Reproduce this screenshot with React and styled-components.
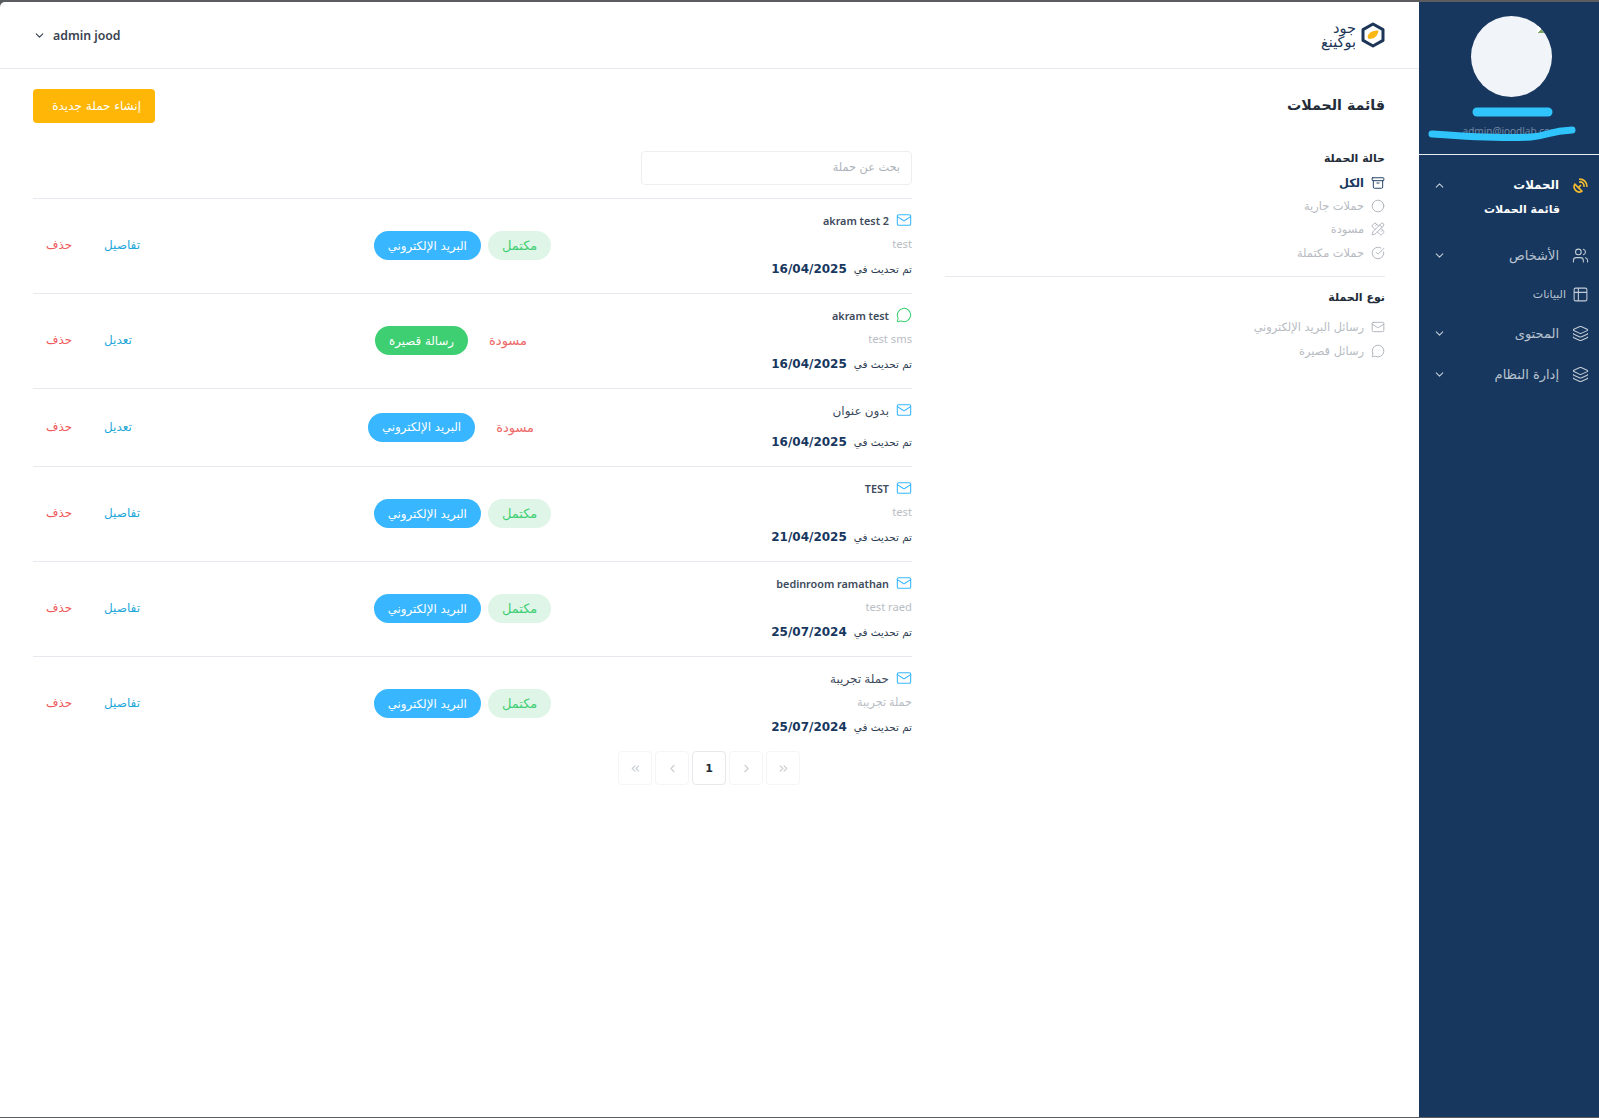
import React from 'react';
import styled, { createGlobalStyle } from 'styled-components';
import {
  Archive,
  ChevronDown,
  ChevronLeft,
  ChevronRight,
  ChevronUp,
  ChevronsLeft,
  ChevronsRight,
  Circle,
  CircleCheckBig,
  Layers,
  Mail,
  MessageCircle,
  PencilRuler,
  SatelliteDish,
  Table2,
  Users,
} from 'lucide-react';

const FONT = `'DejaVu Sans', 'Noto Sans', sans-serif`;
const LATIN = `'Noto Sans', 'DejaVu Sans', sans-serif`;

const GlobalStyle = createGlobalStyle`
  * {
    box-sizing: border-box;
  }
  html, body {
    margin: 0;
    padding: 0;
    background: #5a5c60;
    font-family: ${FONT};
  }
`;

const Shell = styled.div`
  display: flex;
  height: 1115px;
  margin: 2px 0 1px;
  border-top-left-radius: 5px;
  overflow: hidden;
`;

/* sidebar */
const Sidebar = styled.aside`
  width: 180px;
  flex-shrink: 0;
  background: #17375e;
  color: #fff;
`;

const Profile = styled.div`
  position: relative;
  height: 153px;
  border-bottom: 1px solid #e9edf2;
  display: flex;
  flex-direction: column;
  align-items: center;
  padding: 14px 0 0 4px;
`;

const Avatar = styled.div`
  position: relative;
  width: 81px;
  height: 81px;
  border-radius: 50%;
  background: #f1f4f9;
  overflow: hidden;
`;

const BrokenImage = styled.span`
  position: absolute;
  top: 10px;
  left: 66px;
  width: 7px;
  height: 7px;
  background: linear-gradient(135deg, #fff 50%, #7fa86a 50%);
`;

const ProfileEmail = styled.div`
  margin-top: 27px;
  font-family: ${LATIN};
  font-size: 10px;
  color: #6f86a3;
  direction: ltr;
`;

const Scribble = styled.svg`
  position: absolute;
  top: 0;
  left: 0;
`;

const Menu = styled.nav`
  padding-top: 15px;
`;

const MenuRow = styled.div`
  height: ${(p) => (p.$first ? 30 : 41)}px;
  display: flex;
  align-items: center;
  padding: 0 8px 0 14px;
  color: ${(p) => (p.$active ? '#fff' : '#b9c3d0')};
  font-size: ${(p) => (p.$active ? 11.8 : 13)}px;
  font-weight: ${(p) => (p.$active ? 600 : 400)};
`;

const MenuIcon = styled.span`
  width: 22px;
  display: flex;
  justify-content: center;
  margin-left: 10px;
  color: ${(p) => p.$color || '#c3ccd7'};
`;

const MenuChevron = styled.span`
  margin-right: auto;
  display: flex;
  color: #c3ccd7;
`;

const SubLink = styled.div`
  height: 20px;
  margin-bottom: 15px;
  padding-right: 39px;
  font-size: 11px;
  font-weight: 700;
  line-height: 20px;
  color: #fff;
`;

const DataRow = styled(MenuRow)`
  height: 36px;
  margin-bottom: 1px;
  font-size: 11px;

  ${MenuIcon} {
    margin-left: 3px;
  }
`;

/* top bar */
const Main = styled.main`
  flex: 1;
  min-width: 0;
  background: #fff;
`;

const Header = styled.header`
  height: 67px;
  border-bottom: 1px solid #e6e9ed;
  display: flex;
  align-items: center;
  justify-content: space-between;
  padding: 0 34px 0 33px;
`;

const Logo = styled.div`
  display: flex;
  align-items: center;
  gap: 5px;
`;

const LogoText = styled.div`
  font-size: 14.5px;
  line-height: 14px;
  color: #1d3557;
`;

const UserMenu = styled.div`
  direction: ltr;
  display: flex;
  align-items: center;
  gap: 7px;
  font-family: ${LATIN};
  font-size: 12.3px;
  font-weight: 600;
  color: #3a4352;
`;

/* content */
const Content = styled.div`
  padding: 20px 34px 0 33px;
`;

const TitleRow = styled.div`
  display: flex;
  align-items: center;
  justify-content: space-between;
  height: 34px;
`;

const PageTitle = styled.h1`
  margin: 0 0 2px;
  font-size: 14.2px;
  font-weight: 700;
  color: #222b38;
`;

const NewButton = styled.button`
  width: 122px;
  height: 34px;
  border: 0;
  border-radius: 4px;
  background: #ffb606;
  color: #fff;
  font-family: ${FONT};
  font-size: 12px;
  padding: 0 14px;
  text-align: right;
`;

const Columns = styled.div`
  display: flex;
  gap: 33px;
  margin-top: 28px;
`;

const Filters = styled.section`
  width: 440px;
  flex-shrink: 0;
`;

const FilterTitle = styled.h2`
  margin: 0;
  font-size: 11px;
  font-weight: 700;
  line-height: 16px;
  color: #222b38;
`;

const FilterGroup = styled.div`
  padding-bottom: 11px;

  & + & {
    border-top: 1px solid #e6e9ed;
    padding-top: 13px;
  }
`;

const FilterList = styled.div`
  margin-top: ${(p) => p.$gap}px;
  display: flex;
  flex-direction: column;
`;

const FilterItem = styled.div`
  height: 23.4px;
  display: flex;
  align-items: center;
  gap: 7px;
  font-size: 11.4px;
  font-weight: ${(p) => (p.$active ? 700 : 400)};
  color: ${(p) => (p.$active ? '#17375e' : '#b7bbc2')};

  svg {
    color: ${(p) => (p.$active ? '#17375e' : '#a3a8b0')};
    flex-shrink: 0;
  }
`;

const ListColumn = styled.section`
  flex: 1;
  min-width: 0;
`;

const SearchBox = styled.div`
  width: 271px;
  height: 34px;
  border: 1px solid #eceef1;
  border-radius: 4px;
  padding: 0 11px 2px;
  display: flex;
  align-items: center;
  font-size: 11.3px;
  color: #adb2ba;
  margin-bottom: 13px;
`;

const Row = styled.article`
  display: grid;
  grid-template-columns: 160px 1fr 140px;
  align-items: center;
  border-top: 1px solid #e6e9ed;
  padding: 11px 0 14px;
`;

const Info = styled.div`
  display: flex;
  flex-direction: column;
`;

const RowTitle = styled.div`
  height: 20px;
  display: flex;
  align-items: center;
  gap: 7px;
  font-family: ${LATIN};
  font-size: ${(p) => (p.$arabic ? 12 : 10.8)}px;
  font-weight: ${(p) => (p.$arabic ? 400 : 600)};
  color: #3d4a5c;
  white-space: nowrap;

  svg {
    color: ${(p) => p.$color};
    flex-shrink: 0;
  }
`;

const RowSub = styled.div`
  height: 20px;
  margin: 4px 0 5px;
  font-family: ${LATIN};
  font-size: 11.2px;
  line-height: 20px;
  color: #b9bdc4;

  &:empty {
    height: 3px;
  }
`;

const Updated = styled.div`
  height: 20px;
  display: flex;
  align-items: center;
  gap: 7px;
  font-size: 10.4px;
  color: #2b3a4e;
  white-space: nowrap;
`;

const DateText = styled.b`
  font-size: 12px;
  font-weight: 700;
  color: #17375e;
`;

const Badges = styled.div`
  display: flex;
  justify-content: center;
  align-items: center;
  gap: 7px;
  padding-top: 2px;
  padding-right: ${(p) => (p.$draft ? 9 : 0)}px;
`;

const StatusPill = styled.span`
  height: 29px;
  padding: 0 14px;
  border-radius: 15px;
  display: flex;
  align-items: center;
  font-size: 13px;
  color: ${(p) => (p.$done ? '#3ecf73' : '#ee6a6a')};
  background: ${(p) => (p.$done ? '#dff5e7' : 'transparent')};
`;

const TypePill = styled.span`
  height: 29px;
  padding: 0 14px;
  border-radius: 15px;
  display: flex;
  align-items: center;
  font-size: 11.8px;
  color: #fff;
  background: ${(p) => (p.$sms ? '#3ecf73' : '#38b6ff')};
`;

const Actions = styled.div`
  display: flex;
  align-items: center;
  padding: 1px 0 0 13px;
  font-size: 12px;
`;

const EditLink = styled.a`
  flex: 1;
  order: 1;
  text-align: left;
  color: #1ea7d8;
`;

const DeleteLink = styled.a`
  order: 2;
  width: 58px;
  text-align: left;
  color: #ee5a5a;
`;

const Pagination = styled.div`
  direction: ltr;
  display: flex;
  justify-content: flex-end;
  gap: 3px;
  padding-right: 112px;
`;

const PageButton = styled.button`
  width: 34px;
  height: 34px;
  padding: 0;
  background: #fff;
  border: 1px solid ${(p) => (p.$current ? '#e6e8ec' : '#f4f5f7')};
  border-radius: 4px;
  display: flex;
  align-items: center;
  justify-content: center;
  font-family: ${FONT};
  font-size: 11px;
  font-weight: 700;
  color: ${(p) => (p.$current ? '#222b38' : '#c9cdd3')};
`;

const campaigns = [
  { title: 'akram test 2', sub: 'test', date: '16/04/2025', done: true, sms: false },
  { title: 'akram test', sub: 'test sms', date: '16/04/2025', done: false, sms: true },
  { title: 'بدون عنوان', sub: '', date: '16/04/2025', done: false, sms: false, arabic: true },
  { title: 'TEST', sub: 'test', date: '21/04/2025', done: true, sms: false },
  { title: 'bedinroom ramathan', sub: 'test raed', date: '25/07/2024', done: true, sms: false },
  { title: 'حملة تجريبة', sub: 'حملة تجريبة', date: '25/07/2024', done: true, sms: false, arabic: true },
];

function LogoMark() {
  return (
    <svg width="24" height="26" viewBox="0 0 24 26" fill="none">
      <path
        d="M12 2 22 7.6v10.8L12 24 2 18.4V7.6Z"
        stroke="#1d3557"
        strokeWidth="3"
        strokeLinejoin="round"
      />
      <path d="M6.5 14.5C8 10.5 11 8.5 17.5 8.5 17 13.5 13.5 17 7.5 17Z" fill="#fbb713" />
    </svg>
  );
}

function CampaignRow({ c }) {
  const Icon = c.sms ? MessageCircle : Mail;
  return (
    <Row>
      <Info>
        <RowTitle $color={c.sms ? '#3ecf73' : '#38b6ff'} $arabic={c.arabic}>
          <Icon size={16} strokeWidth={1.6} />
          <span>{c.title}</span>
        </RowTitle>
        <RowSub>{c.sub}</RowSub>
        <Updated>
          <span>تم تحديث في</span>
          <DateText>{c.date}</DateText>
        </Updated>
      </Info>
      <Badges $draft={!c.done}>
        <StatusPill $done={c.done}>{c.done ? 'مكتمل' : 'مسودة'}</StatusPill>
        <TypePill $sms={c.sms}>{c.sms ? 'رسالة قصيرة' : 'البريد الإلكتروني'}</TypePill>
      </Badges>
      <Actions>
        <EditLink>{c.done ? 'تفاصيل' : 'تعديل'}</EditLink>
        <DeleteLink>حذف</DeleteLink>
      </Actions>
    </Row>
  );
}

export default function App() {
  return (
    <>
      <GlobalStyle />
      <Shell dir="rtl">
        <Sidebar>
          <Profile>
            <Avatar>
              <BrokenImage />
            </Avatar>
            <ProfileEmail>admin@joodlab.com</ProfileEmail>
            <Scribble width="180" height="153" viewBox="0 0 180 153" fill="none">
              <path d="M58 110H129" stroke="#2fc4fb" strokeWidth="9" strokeLinecap="round" />
              <path
                d="M13 132C40 134 80 137 112 135C128 134 130 129 153 128"
                stroke="#2fc4fb"
                strokeWidth="7"
                strokeLinecap="round"
              />
            </Scribble>
          </Profile>
          <Menu>
            <MenuRow $first $active>
              <MenuIcon $color="#f2b92f">
                <SatelliteDish size={17} strokeWidth={2.4} />
              </MenuIcon>
              <span>الحملات</span>
              <MenuChevron>
                <ChevronUp size={13} />
              </MenuChevron>
            </MenuRow>
            <SubLink>قائمة الحملات</SubLink>
            <MenuRow>
              <MenuIcon>
                <Users size={17} strokeWidth={1.5} />
              </MenuIcon>
              <span>الأشخاص</span>
              <MenuChevron>
                <ChevronDown size={13} />
              </MenuChevron>
            </MenuRow>
            <DataRow>
              <MenuIcon>
                <Table2 size={17} strokeWidth={1.5} />
              </MenuIcon>
              <span>البيانات</span>
            </DataRow>
            <MenuRow>
              <MenuIcon>
                <Layers size={17} strokeWidth={1.5} />
              </MenuIcon>
              <span>المحتوى</span>
              <MenuChevron>
                <ChevronDown size={13} />
              </MenuChevron>
            </MenuRow>
            <MenuRow>
              <MenuIcon>
                <Layers size={17} strokeWidth={1.5} />
              </MenuIcon>
              <span>إدارة النظام</span>
              <MenuChevron>
                <ChevronDown size={13} />
              </MenuChevron>
            </MenuRow>
          </Menu>
        </Sidebar>
        <Main>
          <Header>
            <Logo>
              <LogoMark />
              <LogoText>
                جود
                <br />
                بوكينغ
              </LogoText>
            </Logo>
            <UserMenu>
              <ChevronDown size={13} strokeWidth={2.2} />
              <span>admin jood</span>
            </UserMenu>
          </Header>
          <Content>
            <TitleRow>
              <PageTitle>قائمة الحملات</PageTitle>
              <NewButton>إنشاء حملة جديدة</NewButton>
            </TitleRow>
            <Columns>
              <Filters>
                <FilterGroup>
                  <FilterTitle>حالة الحملة</FilterTitle>
                  <FilterList $gap={4}>
                    <FilterItem $active>
                      <Archive size={14} strokeWidth={1.6} />
                      الكل
                    </FilterItem>
                    <FilterItem>
                      <Circle size={14} strokeWidth={1.4} />
                      حملات جارية
                    </FilterItem>
                    <FilterItem>
                      <PencilRuler size={14} strokeWidth={1.4} />
                      مسودة
                    </FilterItem>
                    <FilterItem>
                      <CircleCheckBig size={14} strokeWidth={1.4} />
                      حملات مكتملة
                    </FilterItem>
                  </FilterList>
                </FilterGroup>
                <FilterGroup>
                  <FilterTitle>نوع الحملة</FilterTitle>
                  <FilterList $gap={10}>
                    <FilterItem>
                      <Mail size={14} strokeWidth={1.4} />
                      رسائل البريد الإلكتروني
                    </FilterItem>
                    <FilterItem>
                      <MessageCircle size={14} strokeWidth={1.4} />
                      رسائل قصيرة
                    </FilterItem>
                  </FilterList>
                </FilterGroup>
              </Filters>
              <ListColumn>
                <SearchBox>بحث عن حملة</SearchBox>
                {campaigns.map((c) => (
                  <CampaignRow key={c.title} c={c} />
                ))}
                <Pagination>
                  <PageButton>
                    <ChevronsLeft size={13} />
                  </PageButton>
                  <PageButton>
                    <ChevronLeft size={13} />
                  </PageButton>
                  <PageButton $current>1</PageButton>
                  <PageButton>
                    <ChevronRight size={13} />
                  </PageButton>
                  <PageButton>
                    <ChevronsRight size={13} />
                  </PageButton>
                </Pagination>
              </ListColumn>
            </Columns>
          </Content>
        </Main>
      </Shell>
    </>
  );
}
